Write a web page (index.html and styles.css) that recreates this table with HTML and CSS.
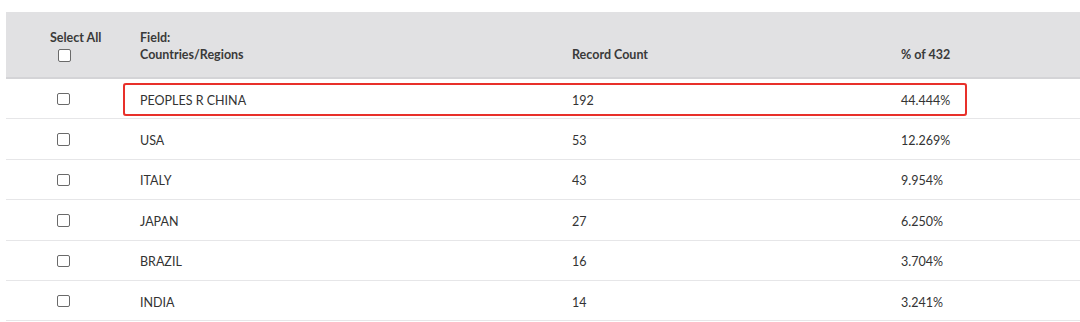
FILE: index.html
```html
<!DOCTYPE html>
<html>
<head>
<meta charset="utf-8">
<link rel="stylesheet" href="styles.css">
</head>
<body>
<div class="table">
  <div class="head">
    <div class="cell sel">
      <span class="sel-label">Select All</span>
      <span class="box head-box"></span>
    </div>
    <div class="cell field">Field:<br>Countries/Regions</div>
    <div class="cell second">Record Count</div>
    <div class="cell second">% of 432</div>
    <div class="cell"></div>
  </div>
  <div class="row">
    <div class="cell chk"><span class="box"></span></div>
    <div class="cell">PEOPLES R CHINA</div>
    <div class="cell">192</div>
    <div class="cell">44.444%</div>
    <div class="cell"></div>
    <span class="mark"></span>
  </div>
  <div class="row">
    <div class="cell chk"><span class="box"></span></div>
    <div class="cell">USA</div>
    <div class="cell">53</div>
    <div class="cell">12.269%</div>
    <div class="cell"></div>
  </div>
  <div class="row">
    <div class="cell chk"><span class="box"></span></div>
    <div class="cell">ITALY</div>
    <div class="cell">43</div>
    <div class="cell">9.954%</div>
    <div class="cell"></div>
  </div>
  <div class="row">
    <div class="cell chk"><span class="box"></span></div>
    <div class="cell">JAPAN</div>
    <div class="cell">27</div>
    <div class="cell">6.250%</div>
    <div class="cell"></div>
  </div>
  <div class="row">
    <div class="cell chk"><span class="box"></span></div>
    <div class="cell">BRAZIL</div>
    <div class="cell">16</div>
    <div class="cell">3.704%</div>
    <div class="cell"></div>
  </div>
  <div class="row">
    <div class="cell chk"><span class="box"></span></div>
    <div class="cell">INDIA</div>
    <div class="cell">14</div>
    <div class="cell">3.241%</div>
    <div class="cell"></div>
  </div>
</div>
</body>
</html>
```

FILE: styles.css
```css
html, body {
  margin: 0;
  padding: 0;
  background: #ffffff;
}
body {
  font-family: "Lato", "Liberation Sans", sans-serif;
  color: #333333;
  font-size: 12.5px;
}
.table {
  margin: 12px 0 0 6px;
}
.head, .row {
  display: grid;
  grid-template-columns: 117px 432px 329px 83px 1fr;
}
.head {
  background: #e1e1e3;
  height: 65px;
  border-bottom: 2px solid #d4d4d7;
  align-items: start;
  font-weight: 700;
  color: #3a3a3a;
  line-height: 17px;
}
.head .cell {
  padding-top: 17px;
}
.cell {
  padding-left: 17px;
}
.head .sel {
  padding-left: 44px;
  display: flex;
  flex-direction: column;
  align-items: flex-start;
}
.head-box {
  margin-left: 8px;
  margin-top: 3px;
}
.head .second {
  padding-top: 34px;
}
.row {
  position: relative;
  height: 40.4px;
  box-sizing: border-box;
  border-bottom: 1px solid #e6e6e8;
  align-items: center;
}
.row .cell {
  padding-top: 3px;
}
.row .chk {
  padding-left: 51px;
  padding-top: 1px;
  display: flex;
  align-items: center;
}
.box {
  display: block;
  width: 10.5px;
  height: 10.5px;
  border: 1.7px solid #6a6a6a;
  border-radius: 2px;
  background: #fff;
}
.mark {
  position: absolute;
  left: 117px;
  top: 4px;
  width: 844px;
  height: 33px;
  box-sizing: border-box;
  border: 2px solid #e8302a;
  border-radius: 3px;
  box-shadow: 0 0 0.6px #e8302a;
  pointer-events: none;
}
```
